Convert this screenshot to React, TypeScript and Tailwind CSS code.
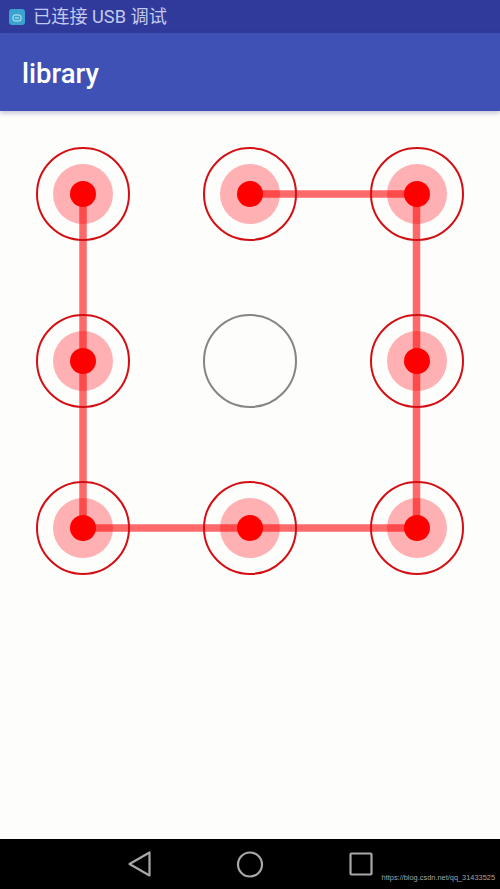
const nodes = [true, true, true, true, false, true, true, true, true];

function Node({ active }: { active: boolean }) {
  if (!active) {
    return <div className="h-[94px] w-[94px] rounded-full border-2 border-[#858585]" />;
  }
  return (
    <div className="flex h-[94px] w-[94px] items-center justify-center">
      <div className="relative z-10 flex h-[94px] w-[94px] items-center justify-center rounded-full border-2 border-[#d40f14]">
        <div className="absolute h-[26px] w-[26px] rounded-full bg-[#ff0000]" />
      </div>
      <div className="absolute h-[60px] w-[60px] rounded-full bg-[#ffb0b2]" />
    </div>
  );
}

export default function App() {
  return (
    <div className="flex h-[889px] w-[500px] flex-col overflow-hidden bg-[#fdfdfc] font-['Roboto','Noto_Sans_CJK_SC',sans-serif]">
      <div className="flex h-[33px] items-center gap-[8px] bg-[#2f3a9b] pl-[9px] pt-[1px] text-[18.2px] text-[#c3c9ec]">
        <svg width="16" height="16" viewBox="0 0 16 16" className="shrink-0">
          <rect width="16" height="16" rx="3" fill="#3aa3cf" />
          <rect x="4" y="6" width="8" height="6" rx="2" fill="none" stroke="#c7eef2" strokeWidth="1" />
          <path d="M6 9h4" stroke="#c7eef2" strokeWidth="1" />
        </svg>
        <span>已连接 USB 调试</span>
      </div>
      <div className="z-20 flex h-[78px] items-center bg-[#3f51b5] pt-[3px] pl-[22px] text-[27.5px] font-medium text-white shadow-[0_2px_5px_rgba(40,50,110,0.3)]">
        library
      </div>
      <div className="relative flex-1 pl-[36px] pt-[36px]">
        <div className="grid w-[428px] grid-cols-[94px_94px_94px] gap-x-[72.75px] gap-y-[73px]">
          {nodes.map((active, i) => (
            <div key={i} className="relative flex items-center justify-center">
              <Node active={active} />
            </div>
          ))}
        </div>
        <svg className="absolute left-0 top-0" width="500" height="728" viewBox="0 0 500 728">
          <path
            d="M83 83V417M83 417H250M250 417H416.5M416.5 417V250M416.5 250V83M416.5 83H250"
            stroke="#ff0000"
            strokeOpacity="0.58"
            strokeWidth="7.5"
            fill="none"
          />
        </svg>
      </div>
      <div className="relative flex h-[50px] items-center justify-center bg-black">
        <svg width="260" height="50" viewBox="0 0 260 50" fill="none" stroke="#a8a8a8" strokeWidth="2.2" strokeLinejoin="round">
          <path d="M29.5 13.5 V36.5 L9.5 25 Z" />
          <circle cx="130" cy="25.5" r="12" />
          <rect x="230.5" y="14.5" width="21" height="21" rx="1" />
        </svg>
        <span className="absolute right-[5px] top-[33px] whitespace-nowrap font-['Liberation_Sans',sans-serif] text-[7.4px] leading-[12px] text-[#a5a5a5]">
          https://blog.csdn.net/qq_31433525
        </span>
      </div>
    </div>
  );
}
